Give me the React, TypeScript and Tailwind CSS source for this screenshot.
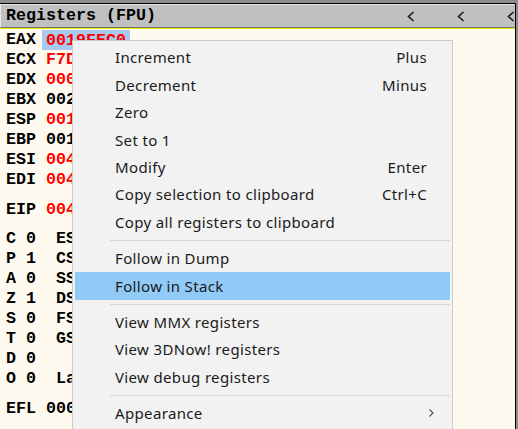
import React from 'react';

type Reg = { name: string; value: string; changed?: boolean; selected?: boolean };

const generalRegs: Reg[] = [
  { name: 'EAX', value: '0019FEC0', changed: true, selected: true },
  { name: 'ECX', value: 'F7D2A94C', changed: true },
  { name: 'EDX', value: '00000000', changed: true },
  { name: 'EBX', value: '00298000' },
  { name: 'ESP', value: '0019FF74', changed: true },
  { name: 'EBP', value: '0019FF80' },
  { name: 'ESI', value: '00401000', changed: true },
  { name: 'EDI', value: '00401000', changed: true },
];

const flags = [
  { flag: 'C 0', seg: 'ES 002B  32bit 0(FFFFFFFF)' },
  { flag: 'P 1', seg: 'CS 0023  32bit 0(FFFFFFFF)' },
  { flag: 'A 0', seg: 'SS 002B  32bit 0(FFFFFFFF)' },
  { flag: 'Z 1', seg: 'DS 002B  32bit 0(FFFFFFFF)' },
  { flag: 'S 0', seg: 'FS 0053  32bit 2A6000(FFF)' },
  { flag: 'T 0', seg: 'GS 002B  32bit 0(FFFFFFFF)' },
  { flag: 'D 0', seg: '' },
  { flag: 'O 0', seg: 'LastErr 00000000 ERROR_SUCCESS' },
];

type MenuEntry = { label?: string; key?: string; sub?: boolean; active?: boolean; sep?: boolean };

const menu: MenuEntry[] = [
  { label: 'Increment', key: 'Plus' },
  { label: 'Decrement', key: 'Minus' },
  { label: 'Zero' },
  { label: 'Set to 1' },
  { label: 'Modify', key: 'Enter' },
  { label: 'Copy selection to clipboard', key: 'Ctrl+C' },
  { label: 'Copy all registers to clipboard' },
  { sep: true },
  { label: 'Follow in Dump' },
  { label: 'Follow in Stack', active: true },
  { sep: true },
  { label: 'View MMX registers' },
  { label: 'View 3DNow! registers' },
  { label: 'View debug registers' },
  { sep: true },
  { label: 'Appearance', sub: true },
];

const Chevron = () => (
  <svg width="8" height="11" viewBox="0 0 8 11" className="block">
    <path d="M6.5 1 L1.5 5.5 L6.5 10" fill="none" stroke="#1a1a1a" strokeWidth="1.6" />
  </svg>
);

const RegRow: React.FC<{ r: Reg }> = ({ r }) => (
  <div className="flex h-[20px] items-center whitespace-pre">
    <span className="text-black">{r.name} </span>
    <span className={`${r.changed ? 'text-[#ff0000]' : 'text-black'} ${r.selected ? 'bg-[#a9c9ee] px-[4px] -mx-[4px] h-[20px] leading-[20px] pt-[1px]' : ''}`}>
      {r.value}
    </span>
  </div>
);

export default function App() {
  return (
    <div className="w-[518px] h-[429px] overflow-hidden bg-[#8c8c8c] pt-[3px] pr-[2px] relative">
      <div className="h-full border-t border-r border-black bg-[#fffaef] flex flex-col font-['Liberation_Mono',monospace] font-bold text-[16.67px] leading-[20px]">
        {/* Title bar */}
        <div className="h-[24px] shrink-0 bg-[#c0c0c0] border-t border-l border-t-[#e8e8e8] border-l-[#e8e8e8] border-b border-b-[#707070] flex items-center pl-[5px]">
          <span className="text-black">Registers (FPU)</span>
          <div className="ml-auto flex items-center gap-[42px]">
            <Chevron />
            <Chevron />
            <Chevron />
          </div>
        </div>
        <div className="h-[1px] bg-[#f0f000] shrink-0" />

        {/* Register list */}
        <div className="pl-[6px] pt-[1px] flex flex-col">
          {generalRegs.map((r) => (
            <RegRow key={r.name} r={r} />
          ))}
          <div className="h-[10px]" />
          <RegRow r={{ name: 'EIP', value: '00401000', changed: true }} />
          <div className="h-[9px]" />
          {flags.map((f) => (
            <div key={f.flag} className="flex h-[20px] items-center whitespace-pre text-black">
              {f.flag}  {f.seg}
            </div>
          ))}
          <div className="h-[10px]" />
          <RegRow r={{ name: 'EFL', value: '00000246' }} />
        </div>
      </div>

      {/* Context menu */}
      <div className="absolute left-[72px] top-[40px] w-[381px] h-[400px] bg-[#f2f2f2] border border-[#cccccc] pt-[3px] px-[2px] font-['Noto_Sans',sans-serif] text-[15px] tracking-[0.35px] text-[#1a1a1a]">
        {menu.map((m, i) =>
          m.sep ? (
            <div key={i} className="h-[9px] flex items-center pl-[35px]">
              <div className="h-[1px] w-full bg-[#d6d6d6]" />
            </div>
          ) : (
            <div
              key={i}
              className={`h-[27.4px] flex items-center pl-[40px] pr-[23px] ${m.active ? 'bg-[#91c9f7]' : ''}`}
            >
              <span>{m.label}</span>
              {m.key && <span className="ml-auto">{m.key}</span>}
              {m.sub && (
                <svg width="7" height="10" viewBox="0 0 7 10" className="ml-auto mr-[-8px]">
                  <path d="M1.5 1.5 L5 5 L1.5 8.5" fill="none" stroke="#555" strokeWidth="1.2" />
                </svg>
              )}
            </div>
          )
        )}
      </div>
    </div>
  );
}
